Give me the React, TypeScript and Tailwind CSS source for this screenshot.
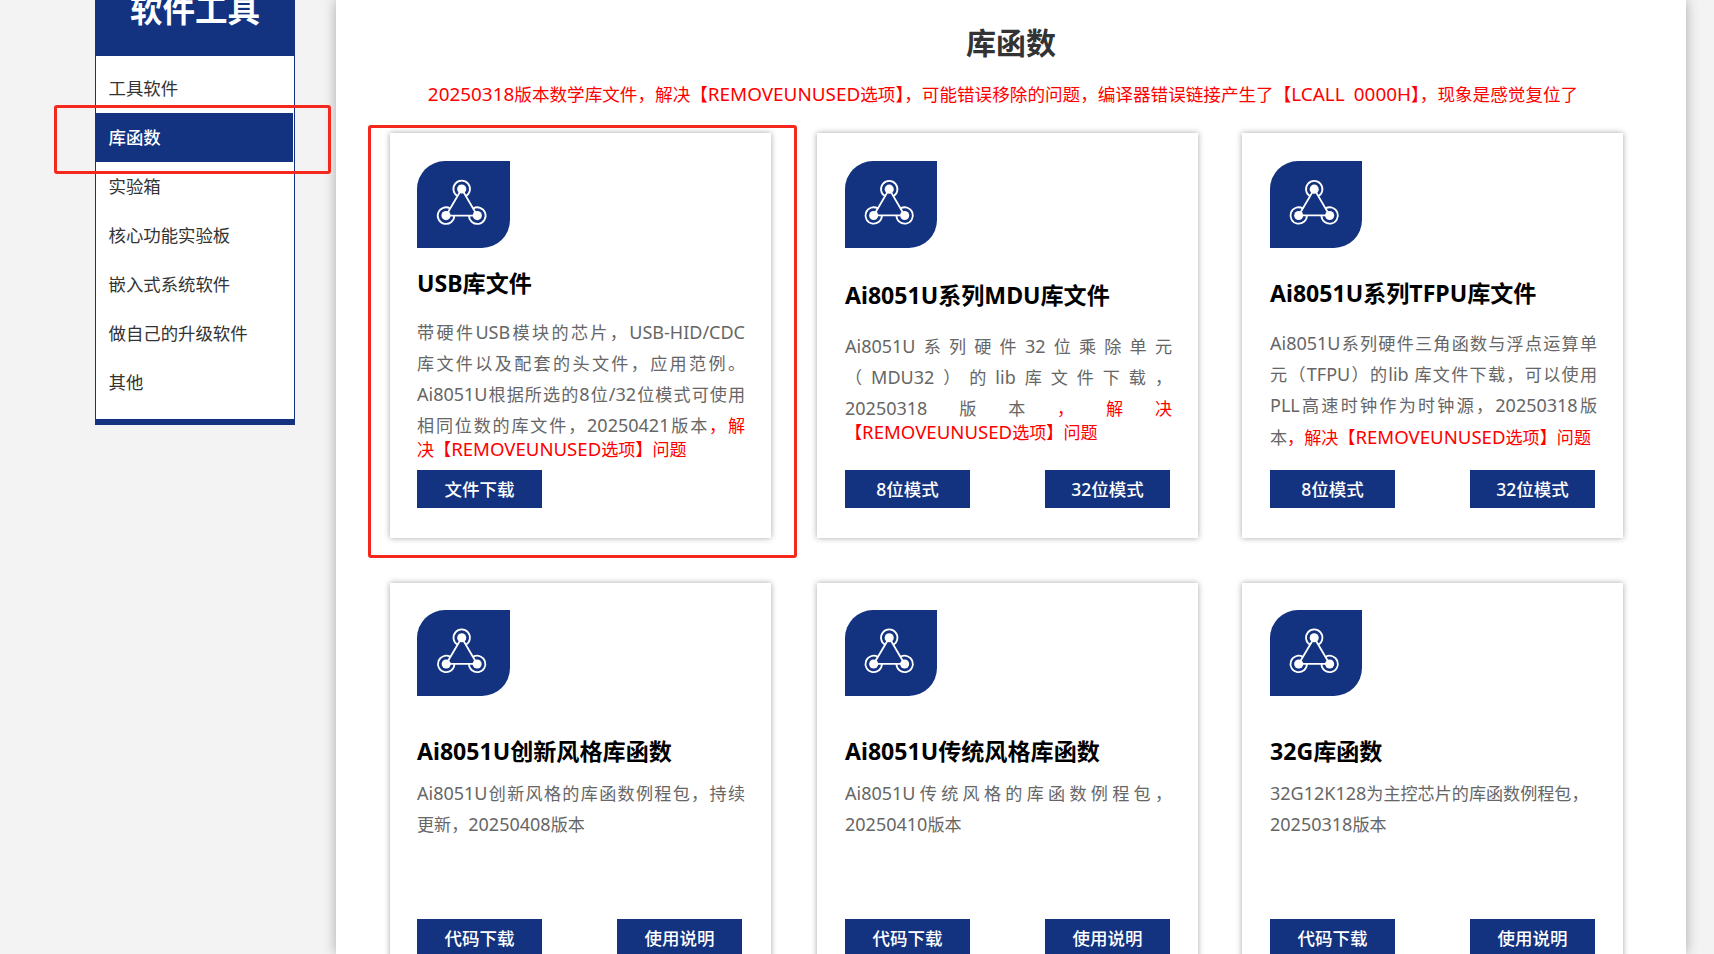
const font = 'font-["Noto_Sans","Noto_Sans_CJK_SC",sans-serif]';

const navItems = ['工具软件', '库函数', '实验箱', '核心功能实验板', '嵌入式系统软件', '做自己的升级软件', '其他'];

// latin runs sit a little larger than the CJK around them, like the original font pairing
function Mixed({ text, latin }: { text: string; latin: string }) {
  return (
    <>
      {text.split(/([\x21-\x7e]+)/).map((part, i) =>
        i % 2 === 1 ? (
          <span key={i} className={latin}>
            {part}
          </span>
        ) : (
          part
        ),
      )}
    </>
  );
}

function NetworkIcon() {
  return (
    <svg viewBox="0 0 93 87" className="h-full w-full" fill="none" stroke="white" strokeWidth="1.8">
      <path d="M44.7 28 L29 54.6 H60.3 Z" />
      <path d="M40.55 35.19 A8.3 8.3 0 1 1 48.85 35.19" />
      <path d="M33.15 47.41 A8.3 8.3 0 1 0 37.3 54.6" />
      <path d="M56.15 47.41 A8.3 8.3 0 1 1 52 54.6" />
      <circle cx="44.7" cy="28" r="4.6" fill="white" stroke="none" />
      <circle cx="29" cy="54.6" r="4.6" fill="white" stroke="none" />
      <circle cx="60.3" cy="54.6" r="4.6" fill="white" stroke="none" />
    </svg>
  );
}

function Btn({ label }: { label: string }) {
  return (
    <a className="flex h-[38px] w-[125px] items-center justify-center bg-[#133381] text-[17.5px] font-medium text-white">
      {label}
    </a>
  );
}

// gray part, red part, and whether the line stretches to both edges
type Line = { gray?: string; red?: string; fill?: boolean };

type CardData = {
  title: string;
  titleClass: string;
  textClass: string;
  lines: Line[];
  buttons: string[];
  marked?: boolean;
  boxClass: string;
  iconClass: string;
};

const topRow = 'h-[405px] pt-[28px] pb-[30px]';
const bottomRow = 'h-[405px] pt-[27px] pb-[31px]';

const cards: CardData[] = [
  {
    title: 'USB库文件',
    titleClass: 'mt-[19px]',
    textClass: 'mt-[18px]',
    lines: [
      { gray: '带硬件USB模块的芯片，USB-HID/CDC', fill: true },
      { gray: '库文件以及配套的头文件，应用范例。', fill: true },
      { gray: 'Ai8051U根据所选的8位/32位模式可使用', fill: true },
      { gray: '相同位数的库文件，20250421版本', red: '，解', fill: true },
      { red: '决【REMOVEUNUSED选项】问题' },
    ],
    buttons: ['文件下载'],
    marked: true,
    boxClass: `${topRow} pl-[27px]`,
    iconClass: 'h-[87px] w-[93px]',
  },
  {
    title: 'Ai8051U系列MDU库文件',
    titleClass: 'mt-[31px]',
    textClass: 'mt-[20px]',
    lines: [
      { gray: 'Ai8051U系列硬件32位乘除单元', fill: true },
      { gray: '（MDU32）的lib库文件下载，', fill: true },
      { gray: '20250318版本', red: '，解决', fill: true },
      { red: '【REMOVEUNUSED选项】问题' },
    ],
    buttons: ['8位模式', '32位模式'],
    boxClass: `${topRow} pl-[28px]`,
    iconClass: 'h-[87px] w-[92px]',
  },
  {
    title: 'Ai8051U系列TFPU库文件',
    titleClass: 'mt-[29px]',
    textClass: 'mt-[19px]',
    lines: [
      { gray: 'Ai8051U系列硬件三角函数与浮点运算单', fill: true },
      { gray: '元（TFPU）的lib 库文件下载，可以使用', fill: true },
      { gray: 'PLL高速时钟作为时钟源，20250318版', fill: true },
      { gray: '本', red: '，解决【REMOVEUNUSED选项】问题' },
    ],
    buttons: ['8位模式', '32位模式'],
    boxClass: `${topRow} pl-[28px]`,
    iconClass: 'h-[87px] w-[92px]',
  },
  {
    title: 'Ai8051U创新风格库函数',
    titleClass: 'mt-[39px]',
    textClass: 'mt-[11px]',
    lines: [{ gray: 'Ai8051U创新风格的库函数例程包，持续', fill: true }, { gray: '更新，20250408版本' }],
    buttons: ['代码下载', '使用说明'],
    boxClass: `${bottomRow} pl-[27px]`,
    iconClass: 'h-[86px] w-[93px]',
  },
  {
    title: 'Ai8051U传统风格库函数',
    titleClass: 'mt-[39px]',
    textClass: 'mt-[11px]',
    lines: [{ gray: 'Ai8051U传统风格的库函数例程包，', fill: true }, { gray: '20250410版本' }],
    buttons: ['代码下载', '使用说明'],
    boxClass: `${bottomRow} pl-[28px]`,
    iconClass: 'h-[86px] w-[92px]',
  },
  {
    title: '32G库函数',
    titleClass: 'mt-[39px]',
    textClass: 'mt-[11px]',
    lines: [{ gray: '32G12K128为主控芯片的库函数例程包，' }, { gray: '20250318版本' }],
    buttons: ['代码下载', '使用说明'],
    boxClass: `${bottomRow} pl-[28px]`,
    iconClass: 'h-[86px] w-[92px]',
  },
];

function Card({ card }: { card: CardData }) {
  return (
    <div className={`${card.boxClass} relative flex w-[381px] flex-col bg-white pr-[26px] shadow-[0_0_6px_rgba(0,0,0,0.35)]`}>
      {card.marked && (
        <div className="absolute -top-[8px] -right-[26px] -bottom-[20px] -left-[22px] rounded-[3px] border-[3px] border-[#f5281e]" />
      )}
      <div className={`${card.iconClass} shrink-0 rounded-tl-[28px] rounded-br-[28px] bg-[#133381]`}>
        <NetworkIcon />
      </div>
      <h3 className={`${card.titleClass} text-[23.1px] leading-[32px] font-bold text-black`}>{card.title}</h3>
      <p className={`${card.textClass} text-[17.1px] text-[#ff0000]`}>
        {card.lines.map((line, i) => (
          <span
            key={i}
            className={`block ${line.gray ? 'leading-[31px]' : 'leading-[15px]'} ${line.fill ? 'text-justify [text-align-last:justify]' : ''}`}
          >
            {line.gray && (
              <span className="text-[#666]">
                <Mixed text={line.gray} latin="text-[18px]" />
              </span>
            )}
            {line.red && <Mixed text={line.red} latin="text-[18.6px]" />}
          </span>
        ))}
      </p>
      <div className="mt-auto flex w-[325px] justify-between">
        {card.buttons.map((b) => (
          <Btn key={b} label={b} />
        ))}
      </div>
    </div>
  );
}

export default function App() {
  return (
    <div className={`${font} flex h-[954px] items-start overflow-hidden bg-[#f3f3f3]`}>
      <aside className="ml-[95px] w-[200px] shrink-0">
        <div className="flex h-[56px] items-end justify-center overflow-hidden bg-[#133381] pb-[23px] text-[32.5px] leading-[46px] font-bold text-white">
          软件工具
        </div>
        <ul className="border-x-[1.5px] border-b-[6px] border-[#133381] bg-white pt-[8px] pb-[12px]">
          {navItems.map((item) => (
            <li
              key={item}
              className={
                item === '库函数'
                  ? 'relative mr-[1px] flex h-[49px] items-center bg-[#133381] pl-[12.5px] text-[17.4px] font-medium text-white'
                  : 'flex h-[49px] items-center pl-[12.5px] text-[17.4px] text-[#333]'
              }
            >
              {item}
              {item === '库函数' && (
                <div className="absolute -top-[8px] -right-[38px] -bottom-[12px] -left-[42px] rounded-[3px] border-[3px] border-[#f5281e]" />
              )}
            </li>
          ))}
        </ul>
      </aside>
      <main className="ml-[41px] h-[954px] w-[1350px] shrink-0 bg-white pt-[22px] shadow-[0_0_12px_rgba(0,0,0,0.3)]">
        <h2 className="text-center text-[30px] leading-[42px] font-bold text-[#333]">库函数</h2>
        <p className="mt-[15px] pr-[16px] text-center text-[17.6px] leading-[30px] text-[#ff0000]">
          <Mixed
            text="20250318版本数学库文件，解决【REMOVEUNUSED选项】，可能错误移除的问题，编译器错误链接产生了【LCALL&nbsp;&nbsp;0000H】，现象是感觉复位了"
            latin="text-[18.9px]"
          />
        </p>
        <div className="mt-[24px] ml-[54px] grid grid-cols-[427px_425px_381px] gap-y-[45px]">
          {cards.map((c) => (
            <Card key={c.title} card={c} />
          ))}
        </div>
      </main>
    </div>
  );
}
